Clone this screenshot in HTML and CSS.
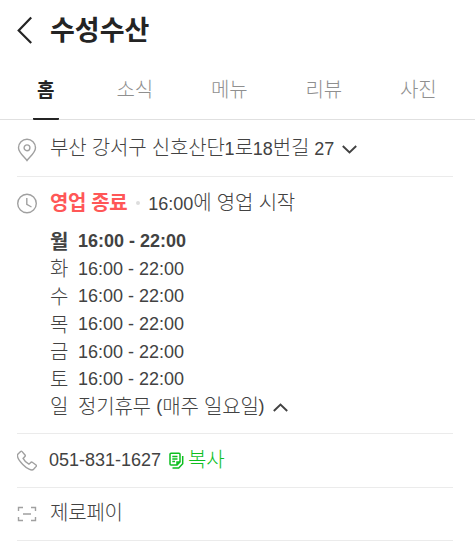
FILE: index.html
```html
<!DOCTYPE html>
<html lang="ko">
<head>
    <meta charset="UTF-8">
    <meta name="viewport" content="width=device-width, initial-scale=1.0">
    <title>수성수산</title>
    <link rel="stylesheet" href="styles.css">
</head>
<body>
    <header>
        <svg class="back" width="16" height="28" viewBox="0 0 16 28"><path d="M15.2 1.5L2.7 14.5L15.2 27" /></svg>
        <h1>수성수산</h1>
    </header>

    <nav class="tabs">
        <a class="tab active"><span>홈</span></a>
        <a class="tab">소식</a>
        <a class="tab">메뉴</a>
        <a class="tab">리뷰</a>
        <a class="tab">사진</a>
    </nav>

    <main>
        <section class="row address">
            <svg class="icon" width="20" height="24" viewBox="0 0 20 24"><path d="M10 22.5C7 18.5 1.5 14.5 1.5 9.7a8.5 8.5 0 0 1 17 0C18.5 14.5 13 18.5 10 22.5z" /><circle cx="10" cy="9.8" r="2.9" /></svg>
            <p><span class="ko">부산 강서구 신호산단</span>1<span class="ko">로</span>18<span class="ko">번길</span> 27</p>
            <svg class="arrow" width="15" height="9" viewBox="0 0 15 9"><path d="M.8 1l6.7 6.5L14.2 1" /></svg>
        </section>

        <section class="row hours">
            <svg class="icon" width="20" height="22" viewBox="0 0 20 22"><circle cx="10" cy="11.5" r="9.3" /><path d="M9.8 6v6.4l4.7 2.6" /></svg>
            <div class="hours-info">
                <div class="status"><strong class="ko">영업 종료</strong><i class="dot"></i><span>16:00<span class="ko">에 영업 시작</span></span></div>
                <ul>
                    <li class="today"><span class="day ko">월</span>16:00 - 22:00</li>
                    <li><span class="day ko">화</span>16:00 - 22:00</li>
                    <li><span class="day ko">수</span>16:00 - 22:00</li>
                    <li><span class="day ko">목</span>16:00 - 22:00</li>
                    <li><span class="day ko">금</span>16:00 - 22:00</li>
                    <li><span class="day ko">토</span>16:00 - 22:00</li>
                    <li class="closed"><span class="day ko">일</span><span class="ko">정기휴무 </span>(<span class="ko">매주 일요일</span>)<svg class="arrow" width="15" height="9" viewBox="0 0 15 9"><path d="M.8 8l6.7-6.5L14.2 8" /></svg></li>
                </ul>
            </div>
        </section>

        <section class="row phone">
            <svg class="icon" width="20" height="22" viewBox="0 0 20 22"><path d="M.8 4.2L3.6 1.5q.8-.7 1.5.1L8 5q.6.8-.1 1.5L6.1 8.4c1.4 2.7 3.2 4.5 5.8 5.8l1.9-1.8q.7-.6 1.5-.1l3.7 2.7q.8.6.2 1.4l-2.6 2.9c-1.7 1.8-6.8-.6-10.8-4.8S-.4 6.4.8 4.2z" /></svg>
            <p>051-831-1627</p>
            <a class="copy"><svg width="15" height="17" viewBox="0 0 15 17"><path d="M2 1.2h8q1 0 1 1V10l-3 3H2q-1 0-1-1V2.2q0-1 1-1zM3.3 4.5h5.2M3.3 7h5.2M3.3 9.5h2.7M13.7 4v7.8L9.7 16H3.5M11 10H8v3" /></svg><span class="ko">복사</span></a>
        </section>

        <section class="row pay">
            <svg class="icon" width="20" height="16" viewBox="0 0 20 16"><path d="M1.5 5V1.5H6M14 1.5h4.5V5M1.5 11v3.5H6M14 14.5h4.5V11M6 8h8" /></svg>
            <p class="ko">제로페이</p>
        </section>
    </main>
</body>
</html>
```

FILE: styles.css
```css
* {
    box-sizing: border-box;
}

body {
    margin: 0;
    font-family: "Liberation Sans", "Noto Sans CJK KR", sans-serif;
    font-size: 18px;
    color: #424242;
    background-color: #fff;
}

p, h1, ul {
    margin: 0;
    padding: 0;
}

svg {
    display: block;
    flex-shrink: 0;
    fill: none;
    stroke: currentColor;
}

.ko {
    font-family: "Noto Sans CJK KR", sans-serif;
    font-size: 20px;
    font-weight: 300;
    letter-spacing: -0.2px;
    line-height: 1;
}

header {
    display: flex;
    align-items: center;
    height: 60px;
    padding-left: 16px;
    color: #242424;
}

.back {
    stroke-width: 2.2;
}

h1 {
    margin-left: 18px;
    padding-bottom: 2px;
    font-family: "Noto Sans CJK KR", sans-serif;
    font-size: 27px;
    line-height: 40px;
    font-weight: 700;
}

.tabs {
    display: flex;
    height: 60px;
    padding-left: 5px;
    border-bottom: 1px solid #e0e0e0;
}

.tab {
    width: 94.5px;
    flex-shrink: 0;
    text-align: center;
    font-family: "Noto Sans CJK KR", sans-serif;
    font-size: 20px;
    font-weight: 300;
    letter-spacing: -0.2px;
    line-height: 58px;
    color: #8f8f8f;
}

.tab.active {
    width: 82.5px;
    color: #242424;
    font-size: 19px;
    font-weight: 700;
}

.tab.active span {
    display: inline-block;
    height: 60px;
    width: 26px;
    padding-right: 1px;
    border-bottom: 2px solid #242424;
    border-radius: 1px;
}

main {
    margin: 0 22px 0 17px;
}

.row {
    display: flex;
    align-items: center;
    height: 54px;
    border-bottom: 1px solid #ebebeb;
}

.icon {
    margin-right: 13px;
    color: #a0a0a0;
    stroke-width: 1.4;
}

.arrow {
    margin-left: 8px;
    stroke-width: 1.9;
}

.address {
    height: 57px;
}

.address p {
    padding-top: 1px;
}

.address .icon,
.address .arrow {
    margin-top: 3px;
}

.hours {
    height: 257px;
    align-items: flex-start;
    padding-top: 15px;
}

.status {
    display: flex;
    align-items: center;
    height: 22px;
    margin-bottom: 14px;
}

.status strong {
    padding-bottom: 2px;
    font-weight: 700;
    letter-spacing: -0.4px;
    color: #ff5757;
}

.dot {
    width: 4px;
    height: 4px;
    margin: 0 8px 0 9px;
    border-radius: 50%;
    background-color: #ddd;
}

ul {
    list-style: none;
}

li {
    display: flex;
    align-items: center;
    height: 27.6px;
    white-space: pre;
}

.day {
    width: 28px;
    padding-bottom: 2px;
}

.closed {
    height: 25px;
}

.closed .day {
    padding-bottom: 0;
}

.closed .arrow {
    margin-top: 3px;
}

.today,
.today .day {
    font-weight: 700;
}

.phone .icon {
    margin-right: 12px;
}

.phone p {
    margin-right: 8px;
}

.copy {
    display: flex;
    align-items: center;
    color: #0dbf1f;
}

.copy .ko {
    padding-bottom: 3px;
}

.copy svg {
    margin-right: 4px;
    stroke-width: 1.5;
}

.pay {
    height: 53px;
}

.pay p {
    padding-bottom: 5px;
}
```
